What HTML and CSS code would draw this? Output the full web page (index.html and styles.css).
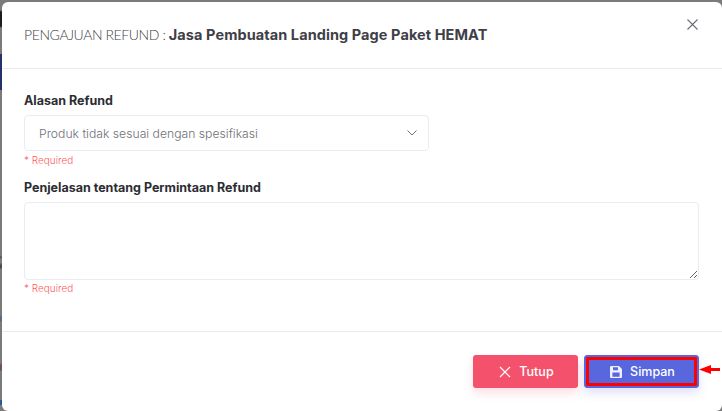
FILE: index.html
```html
<!DOCTYPE html>
<html lang="en">
<head>
    <meta charset="UTF-8">
    <meta name="viewport" content="width=device-width, initial-scale=1.0">
    <title>Pengajuan Refund</title>
    <link rel="stylesheet" href="styles.css">
</head>
<body>
    <div class="modal">
        <!-- Header -->
        <div class="modal-header">
            <h2>PENGAJUAN REFUND : <b>Jasa Pembuatan Landing Page Paket HEMAT</b></h2>
            <button class="close-btn" aria-label="Close">
                <svg width="11" height="11" viewBox="0 0 11 11"><path d="M.5.5l10 10M10.5.5l-10 10"/></svg>
            </button>
        </div>

        <!-- Form -->
        <div class="modal-body">
            <label class="field-label">Alasan Refund</label>
            <div class="select-box">
                <span>Produk tidak sesuai dengan spesifikasi</span>
                <svg width="10" height="6" viewBox="0 0 10 6"><path d="M.5.5L5 5 9.500.5"/></svg>
            </div>
            <p class="required">* Required</p>

            <label class="field-label second">Penjelasan tentang Permintaan Refund</label>
            <textarea class="text-box"></textarea>
            <p class="required">* Required</p>
        </div>

        <!-- Footer -->
        <div class="modal-footer">
            <button class="btn btn-close">
                <svg width="12" height="12" viewBox="0 0 12 12"><path d="M1 1l10 10M11 1L1 11"/></svg>
                Tutup
            </button>
            <button class="btn btn-save">
                <svg width="12" height="12" viewBox="0 0 12 12"><path class="solid" d="M1.200 0h7.800L12 3v7.800A1.200 1.200 0 0 1 10.800 12H1.200A1.200 1.200 0 0 1 0 10.800V1.200A1.200 1.200 0 0 1 1.200 0zM3 1.200v3h5v-3zM2.400 6.600v4.200h7.200V6.600z"/></svg>
                Simpan
            </button>
            <svg class="arrow" width="21" height="9" viewBox="0 0 21 9"><path d="M0 4.500L12 0v3h9v3h-9v3z"/></svg>
        </div>
    </div>
</body>
</html>
```

FILE: styles.css
```css
body {
    margin: 0;
    height: 411px;
    overflow: hidden;
    padding: 2px 0 0 2px;
    box-sizing: border-box;
    background-color: #7b7b7b;
    /* page behind the backdrop, only a sliver shows on the left */
    background-image: linear-gradient(to bottom,
        #7b7b7b 10px, #1c1c1e 12px, #1c1c1e 26px, #7b7b7b 28px,
        #7b7b7b 54px, #26306a 54px, #26306a 90px, #7b7b7b 90px,
        #7b7b7b 256px, #4b4b50 257px, #7b7b7b 259px,
        #7b7b7b 263px, #4b4b55 265px, #4b4b55 268px, #7b7b7b 269px,
        #7b7b7b 315px, #5a6a80 317px, #5a6a80 321px, #7b7b7b 322px,
        #7b7b7b 363px, #70505a 365px, #70505a 370px, #7b7b7b 371px,
        #7b7b7b 400px, #2a5a90 400px, #2a5a90 405px, #7b7b7b 405px);
    background-size: 2px 411px;
    background-repeat: no-repeat;
    font-family: Inter, "Open Sans", sans-serif;
}

.modal {
    position: relative;
    height: 409px;
    background: white;
    border-radius: 6px;
    display: flex;
    flex-direction: column;
}

.modal-header {
    height: 67px;
    box-sizing: border-box;
    border-bottom: 1px solid #e9e9ef;
    padding: 0 24px 0 22px;
    display: flex;
    justify-content: space-between;
}

.modal-header h2 {
    margin: 23px 0 0;
    font-family: Lato, sans-serif;
    font-size: 14px;
    letter-spacing: -0.4px;
    line-height: 20px;
    font-weight: 300;
    color: #3f4047;
}

.modal-header b {
    font-family: Inter, sans-serif;
    font-size: 14.500px;
    font-weight: 700;
    letter-spacing: 0.08px;
}

.close-btn {
    border: none;
    background: none;
    padding: 0;
    height: 11px;
    margin-top: 17px;
    display: flex;
}

.close-btn path {
    fill: none;
    stroke: #6b6c75;
    stroke-width: 1.100;
}

.modal-body {
    flex: 1;
    padding: 24px 23px 0 22px;
}

.field-label {
    display: block;
    font-size: 12.500px;
    line-height: 16px;
    font-weight: 700;
    color: #2c2d33;
    margin-bottom: 6px;
}

.field-label.second {
    margin-top: 13px;
}

.select-box {
    width: 405px;
    height: 36px;
    box-sizing: border-box;
    border: 1px solid #ebebf2;
    border-radius: 4px;
    padding: 0 11px 0 14px;
    display: flex;
    align-items: center;
    justify-content: space-between;
    font-size: 12.200px;
    font-weight: 300;
    color: #6f7079;
}

.select-box path {
    fill: none;
    stroke: #6f7079;
    stroke-width: 1;
}

.required {
    margin: 2px 0 0;
    font-size: 10px;
    line-height: 14px;
    font-weight: 300;
    color: #fd5c63;
}

.text-box {
    display: block;
    width: 675px;
    height: 78px;
    box-sizing: border-box;
    border: 1px solid #ebebf2;
    border-radius: 4px;
    margin: 0;
    padding: 0;
}

.text-box + .required {
    margin-top: 1px;
}

.modal-footer {
    position: relative;
    height: 80px;
    box-sizing: border-box;
    border-top: 1px solid #e9e9ef;
    padding: 23px 23px 0 0;
    display: flex;
    justify-content: flex-end;
    align-items: flex-start;
    gap: 6px;
}

.btn {
    height: 33px;
    box-sizing: border-box;
    border: 1px solid transparent;
    border-radius: 3px;
    color: white;
    font-family: inherit;
    font-size: 12.500px;
    font-weight: 500;
    display: flex;
    align-items: center;
    justify-content: center;
    gap: 8px;
    padding: 0 0 0 2px;
}

.btn path {
    fill: none;
    stroke: white;
    stroke-width: 1.200;
}

.btn path.solid {
    fill: #eef0ff;
    fill-rule: evenodd;
    stroke: none;
}

.btn-close {
    width: 105px;
    background: #f4516c;
    box-shadow: 0 5px 10px rgba(244, 81, 108, 0.19);
}

.btn-save {
    width: 115px;
    background: #5867dd;
    border-color: #5867dd;
    outline: 3px solid #ff0000;
    outline-offset: -5px;
    box-shadow: 0 5px 10px rgba(88, 103, 221, 0.19);
}

/* annotation arrow next to the save button */
.arrow {
    position: absolute;
    right: 2px;
    top: 33px;
}

.arrow path {
    fill: #ff0000;
}
```
